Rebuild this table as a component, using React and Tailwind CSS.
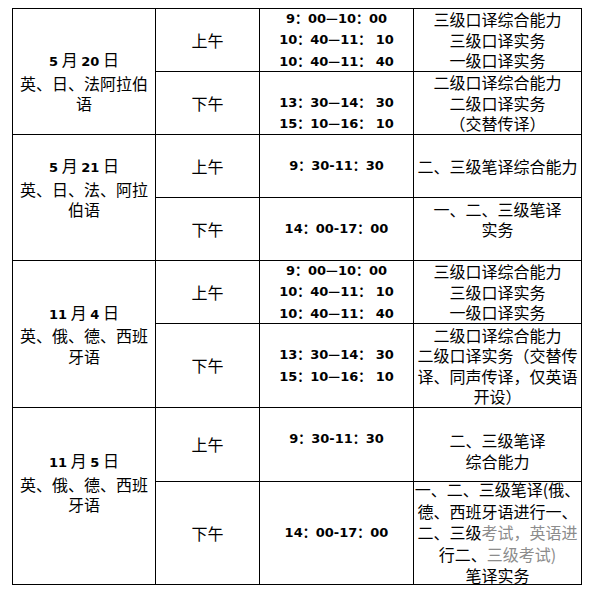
const cjk = "font-['Noto_Sans_CJK_SC',sans-serif]";
const num = "font-['DejaVu_Sans','Noto_Sans_CJK_SC',sans-serif] font-bold text-[13px]";

function Cell({ className = '', children }) {
  return (
    <div className={`flex flex-col items-center justify-center border-r border-b border-black text-center text-[16px] leading-[20.5px] text-black ${className}`}>
      {children}
    </div>
  );
}

function Day({ date, langs }) {
  return (
    <>
      <div>{date}</div>
      {langs.map((l, i) => <div key={i}>{l}</div>)}
    </>
  );
}

// em dash drawn from the CJK font so it is long and heavy like the reference
function Time({ t }) {
  const parts = t.split('—');
  return parts.map((p, i) => (
    <span key={i}>
      {i > 0 && <span className="font-['Noto_Sans_CJK_SC',sans-serif] font-bold">—</span>}
      {p}
    </span>
  ));
}

function Times({ lines }) {
  return lines.map((t, i) => (
    <div key={i} className={`${num} leading-[20.5px] whitespace-pre`}>{t ? <Time t={t} /> : '\u00a0'}</div>
  ));
}

function Lines({ lines }) {
  return lines.map((t, i) => <div key={i} className="whitespace-nowrap">{t}</div>);
}

const D = ({ n }) => <span className={num}>{n}</span>;
const Gray = ({ children }) => <span className="text-[#8c8c8c]">{children}</span>;

export default function App() {
  return (
    <div className={`min-h-[600px] bg-white pt-[8px] pl-[12px] ${cjk}`}>
      <div className="grid w-fit grid-cols-[143px_104px_154px_168px] grid-rows-[63px_63px_63px_63px_63px_84px_74px_103px] border-t border-l border-black">
        {/* 5月20日 */}
        <Cell className="row-span-2 pt-[20px]">
          <Day date={<><D n="5" /> 月 <D n="20" /> 日</>} langs={['英、日、法阿拉伯', '语']} />
        </Cell>
        <Cell>上午</Cell>
        <Cell><Times lines={['9：00—10：00', '10：40—11： 10', '10：40—11： 40']} /></Cell>
        <Cell><Lines lines={['三级口译综合能力', '三级口译实务', '一级口译实务']} /></Cell>
        <Cell>下午</Cell>
        <Cell><Times lines={['', '13：30—14： 30', '15：10—16： 10']} /></Cell>
        <Cell><Lines lines={['二级口译综合能力', '二级口译实务', '（交替传译）']} /></Cell>

        {/* 5月21日 */}
        <Cell className="row-span-2 pb-[20px]">
          <Day date={<><D n="5" /> 月 <D n="21" /> 日</>} langs={['英、日、法、阿拉', '伯语']} />
        </Cell>
        <Cell>上午</Cell>
        <Cell><Times lines={['9：30-11：30']} /></Cell>
        <Cell><Lines lines={['二、三级笔译综合能力']} /></Cell>
        <Cell>下午</Cell>
        <Cell><Times lines={['14：00-17：00']} /></Cell>
        <Cell className="pb-[20px]"><Lines lines={['一、二、三级笔译', '实务']} /></Cell>

        {/* 11月4日 */}
        <Cell className="row-span-2">
          <Day date={<><D n="11" /> 月 <D n="4" /> 日</>} langs={['英、俄、德、西班', '牙语']} />
        </Cell>
        <Cell>上午</Cell>
        <Cell><Times lines={['9：00—10：00', '10：40—11： 10', '10：40—11： 40']} /></Cell>
        <Cell><Lines lines={['三级口译综合能力', '三级口译实务', '一级口译实务']} /></Cell>
        <Cell>下午</Cell>
        <Cell><Times lines={['13：30—14： 30', '15：10—16： 10']} /></Cell>
        <Cell><Lines lines={['二级口译综合能力', '二级口译实务（交替传', '译、同声传译，仅英语', '开设）']} /></Cell>

        {/* 11月5日 */}
        <Cell className="row-span-2 pb-[27px]">
          <Day date={<><D n="11" /> 月 <D n="5" /> 日</>} langs={['英、俄、德、西班', '牙语']} />
        </Cell>
        <Cell>上午</Cell>
        <Cell className="pb-[10px]"><Times lines={['9：30-11：30']} /></Cell>
        <Cell className="pt-[12px]"><Lines lines={['二、三级笔译', '综合能力']} /></Cell>
        <Cell>下午</Cell>
        <Cell><Times lines={['14：00-17：00']} /></Cell>
        <Cell className="leading-[21.5px]">
          <div className="whitespace-nowrap">一、二、三级笔译(俄、</div>
          <div className="whitespace-nowrap">德、西班牙语进行一、</div>
          <div className="whitespace-nowrap">二、三级<Gray>考试，英语进</Gray></div>
          <div className="whitespace-nowrap">行二、<Gray>三级考试)</Gray></div>
          <div className="whitespace-nowrap">笔译实务</div>
        </Cell>
      </div>
    </div>
  );
}
